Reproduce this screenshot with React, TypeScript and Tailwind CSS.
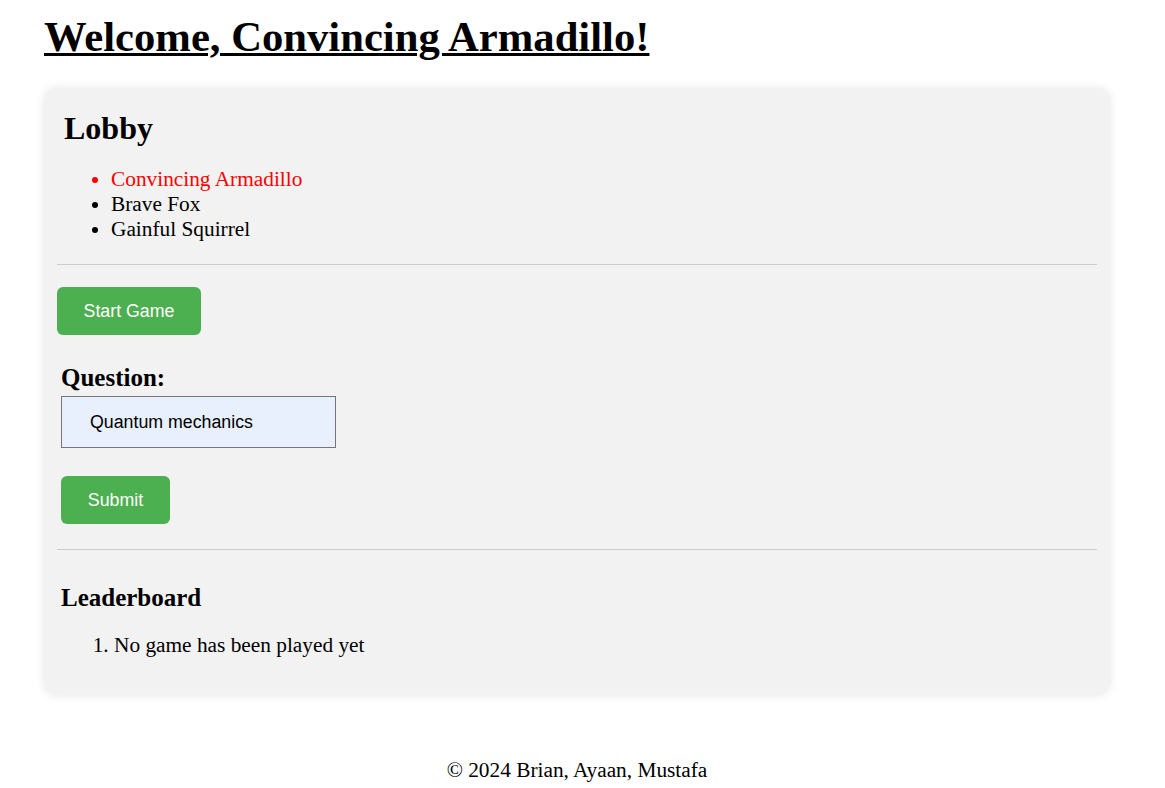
import React from 'react'

const PLAYERS = [
  { name: 'Convincing Armadillo', self: true },
  { name: 'Brave Fox', self: false },
  { name: 'Gainful Squirrel', self: false },
]

export default function App() {
  return (
    <div className="min-h-screen bg-white text-black font-['Liberation_Serif','Times_New_Roman',serif]">
      <div className="ml-[44px] w-[1066px]">
        <h1 className="pt-[12px] text-[42.67px] leading-[49px] font-bold underline decoration-[3px]">
          Welcome, Convincing Armadillo!
        </h1>

        {/* Game card */}
        <div className="mt-[27px] rounded-[13px] bg-[#f2f2f2] px-[13px] pt-[22px] pb-[37px] shadow-[0_0_10px_rgba(0,0,0,0.1)]">
          {/* Lobby */}
          <h2 className="pl-[7px] text-[32px] leading-[37px] font-bold">Lobby</h2>
          <ul className="mt-[20px] list-disc pl-[54px] text-[21.33px] leading-[25px]">
            {PLAYERS.map((p) => (
              <li key={p.name} className={p.self ? 'text-[#ff0000]' : ''}>
                {p.name}
              </li>
            ))}
          </ul>

          <div className="mt-[22px] h-px bg-[#cccccc]" />

          <button className="mt-[22px] block h-[48px] w-[144px] rounded-[6px] bg-[#4caf50] text-[17.78px] text-white font-['Liberation_Sans',Arial,sans-serif]">
            Start Game
          </button>

          {/* Question */}
          <div className="pl-[4px]">
            <h3 className="mt-[28px] text-[25px] leading-[29px] font-bold">Question:</h3>
            <input
              defaultValue="Quantum mechanics"
              className="mt-[4px] block h-[52px] w-[275px] border border-[#767676] bg-[#e8f0fe] pl-[28px] text-[17.78px] text-black outline-none font-['Liberation_Sans',Arial,sans-serif]"
            />
            <button className="mt-[28px] block h-[48px] w-[109px] rounded-[6px] bg-[#4caf50] text-[17.78px] text-white font-['Liberation_Sans',Arial,sans-serif]">
              Submit
            </button>
          </div>

          <div className="mt-[25px] h-px bg-[#cccccc]" />

          {/* Leaderboard */}
          <div className="pl-[4px]">
            <h3 className="mt-[33px] text-[25px] leading-[29px] font-bold">Leaderboard</h3>
            <ol className="mt-[21px] list-decimal pl-[53px] text-[21.33px] leading-[25px]">
              <li>No game has been played yet</li>
            </ol>
          </div>
        </div>

        <footer className="mt-[63px] text-center text-[21.33px] leading-[25px]">
          © 2024 Brian, Ayaan, Mustafa
        </footer>
      </div>
    </div>
  )
}
